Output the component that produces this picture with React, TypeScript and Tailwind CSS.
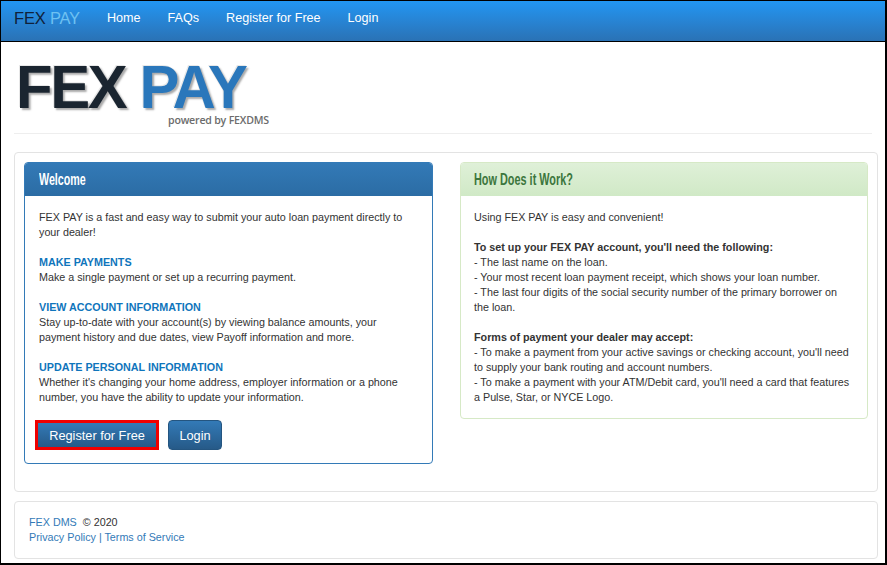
const sans = { fontFamily: '"Liberation Sans", Arial, sans-serif' };

function Heading({ children }: { children: React.ReactNode }) {
  return <div className="font-bold text-[#0f75bc]">{children}</div>;
}

export default function App() {
  return (
    <div style={sans} className="w-[887px] h-[565px] overflow-hidden bg-white border-t border-l border-r-2 border-b-2 border-black text-[10.75px] leading-[15px] text-[#333]">
      <nav className="flex items-center h-[41px] border-b border-black bg-gradient-to-b from-[#2196f3] to-[#2a72b5] text-[12.6px] text-white pl-[13px] pb-[5px]">
        <span className="text-[16.5px] w-[93px] tracking-[-0.2px]">
          <span className="text-[#10213a]">FEX</span> <span className="text-[#6ec1f2]">PAY</span>
        </span>
        <div className="flex gap-[27px]">
          <span>Home</span>
          <span>FAQs</span>
          <span>Register for Free</span>
          <span>Login</span>
        </div>
      </nav>

      <div className="px-[13px]">
        <div className="h-[92px] border-b border-[#eee] relative">
          <div className="absolute left-[2px] top-[20px] text-[62px] leading-[50px] font-bold tracking-[-2.5px] whitespace-nowrap scale-x-[0.966] origin-left" style={{ textShadow: '2px 2px 2px #aaa, -1px -1px 0 #e8e8e8' }}>
            <span className="text-[#1a2530]">FEX</span> <span className="text-[#2a77bb]">PAY</span>
          </div>
          <div className="absolute left-[154px] top-[71px] text-[10.6px] font-semibold text-[#6c6c6c] whitespace-nowrap" style={{ fontFamily: '"Open Sans", sans-serif', letterSpacing: '-0.2px' }}>powered by FEXDMS</div>
        </div>

        <div className="mt-[18px] w-[864px] h-[340px] border-[1.5px] border-[#e3e3e3] rounded-[4px] flex gap-[27px] pl-[9px] pt-[9px] items-start">
          <section className="w-[409px] h-[302px] border border-[#337ab7] rounded-[4px] overflow-hidden">
            <div className="h-[33px] bg-gradient-to-b from-[#337ab7] to-[#2b6ca4] px-[14px] flex items-center text-white text-[17px] font-bold">
              <span className="scale-x-[0.63] origin-left whitespace-nowrap">Welcome</span>
            </div>
            <div className="px-[14px] pt-[14px]">
              <p>FEX PAY is a fast and easy way to submit your auto loan payment directly to your dealer!</p>
              <div className="mt-[15px]"><Heading>MAKE PAYMENTS</Heading>Make a single payment or set up a recurring payment.</div>
              <div className="mt-[15px]"><Heading>VIEW ACCOUNT INFORMATION</Heading>Stay up-to-date with your account(s) by viewing balance amounts, your payment history and due dates, view Payoff information and more.</div>
              <div className="mt-[15px]"><Heading>UPDATE PERSONAL INFORMATION</Heading>Whether it's changing your home address, employer information or a phone number, you have the ability to update your information.</div>
              <div className="mt-[15px] -ml-[4px] flex items-center gap-[9px] text-[12.75px] text-white">
                <button className="w-[124px] h-[30px] border-[3px] border-[#f00000] bg-gradient-to-b from-[#337ab7] to-[#265a88]">Register for Free</button>
                <button className="w-[54px] h-[30px] rounded-[4px] border border-[#245580] bg-gradient-to-b from-[#337ab7] to-[#265a88]">Login</button>
              </div>
            </div>
          </section>

          <section className="w-[408px] h-[257px] border border-[#d6e9c6] rounded-[4px] overflow-hidden">
            <div className="h-[33px] bg-gradient-to-b from-[#dff0d8] to-[#d0e9c6] px-[13px] flex items-center text-[#3c763d] text-[17px] font-bold">
              <span className="scale-x-[0.64] origin-left whitespace-nowrap">How Does it Work?</span>
            </div>
            <div className="px-[13px] pt-[14px]">
              <p>Using FEX PAY is easy and convenient!</p>
              <div className="mt-[15px]">
                <div className="font-bold">To set up your FEX PAY account, you'll need the following:</div>
                <div>- The last name on the loan.</div>
                <div>- Your most recent loan payment receipt, which shows your loan number.</div>
                <div>- The last four digits of the social security number of the primary borrower on the loan.</div>
              </div>
              <div className="mt-[15px]">
                <div className="font-bold">Forms of payment your dealer may accept:</div>
                <div>- To make a payment from your active savings or checking account, you'll need to supply your bank routing and account numbers.</div>
                <div>- To make a payment with your ATM/Debit card, you'll need a card that features a Pulse, Star, or NYCE Logo.</div>
              </div>
            </div>
          </section>
        </div>

        <footer className="mt-[9px] w-[864px] h-[58px] border-[1.5px] border-[#e3e3e3] rounded-[4px] px-[14px] pt-[13px]">
          <div><span className="text-[#337ab7]">FEX DMS</span>&nbsp; © 2020</div>
          <div className="text-[#337ab7]">Privacy Policy | Terms of Service</div>
        </footer>
      </div>
    </div>
  );
}
